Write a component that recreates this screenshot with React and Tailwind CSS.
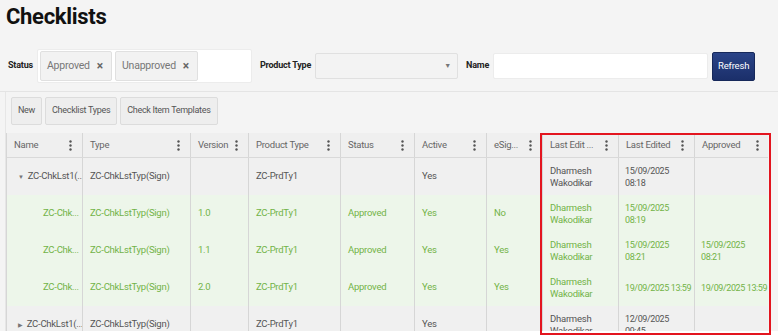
const font = { fontFamily: "Roboto, Lato, sans-serif" };

const columns = [
  { label: "Name", w: "w-[76px]" },
  { label: "Type", w: "w-[108px]" },
  { label: "Version", w: "w-[58px]" },
  { label: "Product Type", w: "w-[92px]" },
  { label: "Status", w: "w-[74px]" },
  { label: "Active", w: "w-[72px]" },
  { label: "eSig...", w: "w-[56px]" },
  { label: "Last Edit ...", w: "w-[76px]" },
  { label: "Last Edited", w: "w-[76px]" },
  { label: "Approved", w: "w-[74px]" },
];

const rows = [
  { kind: "parent", open: true, name: "ZC-ChkLst1(...", type: "ZC-ChkLstTyp(Sign)", version: "", product: "ZC-PrdTy1", status: "", active: "Yes", esig: "", by: ["Dharmesh", "Wakodikar"], edited: ["15/09/2025", "08:18"], approved: [] },
  { kind: "child", name: "ZC-Chk...", type: "ZC-ChkLstTyp(Sign)", version: "1.0", product: "ZC-PrdTy1", status: "Approved", active: "Yes", esig: "No", by: ["Dharmesh", "Wakodikar"], edited: ["15/09/2025", "08:19"], approved: [] },
  { kind: "child", name: "ZC-Chk...", type: "ZC-ChkLstTyp(Sign)", version: "1.1", product: "ZC-PrdTy1", status: "Approved", active: "Yes", esig: "Yes", by: ["Dharmesh", "Wakodikar"], edited: ["15/09/2025", "08:21"], approved: ["15/09/2025", "08:21"] },
  { kind: "child", name: "ZC-Chk...", type: "ZC-ChkLstTyp(Sign)", version: "2.0", product: "ZC-PrdTy1", status: "Approved", active: "Yes", esig: "Yes", by: ["Dharmesh", "Wakodikar"], edited: ["19/09/2025 13:59"], approved: ["19/09/2025 13:59"] },
  { kind: "parent", open: false, name: "ZC-ChkLst1(...", type: "ZC-ChkLstTyp(Sign)", version: "", product: "ZC-PrdTy1", status: "", active: "Yes", esig: "", by: ["Dharmesh", "Wakodikar"], edited: ["12/09/2025", "09:45"], approved: [] },
];

function Kebab() {
  return (
    <svg width="3" height="11" viewBox="0 0 3 11" className="shrink-0">
      <circle cx="1.5" cy="1.5" r="1.2" fill="#555" />
      <circle cx="1.5" cy="5.5" r="1.2" fill="#555" />
      <circle cx="1.5" cy="9.5" r="1.2" fill="#555" />
    </svg>
  );
}

function Chip({ label, w }) {
  return (
    <div className={`flex h-[30px] items-center justify-between rounded-[2px] border border-[#e0e0e0] bg-[#f2f2f2] pl-[6px] pr-[8px] text-[10.5px] tracking-[-0.2px] text-[#777] ${w}`}>
      <span>{label}</span>
      <span className="text-[12px] font-bold text-[#666]">×</span>
    </div>
  );
}

function Lines({ items }) {
  return (
    <div className="flex flex-col leading-[12px]">
      {items.map((t) => (
        <span key={t} className="whitespace-nowrap">{t}</span>
      ))}
    </div>
  );
}

function Row({ r }) {
  const child = r.kind === "child";
  const rowCls = child ? "bg-[#edf6ea] text-[#72b347]" : "bg-[#f0f0f0] text-[#555]";
  const cell = "flex shrink-0 items-center border-r border-[#d6d6d6] px-[7px] overflow-hidden";
  const dateCell = "flex shrink-0 items-center border-r border-[#d6d6d6] pl-[6px] text-[9px] tracking-[-0.4px] overflow-hidden";
  return (
    <div className={`flex h-[37px] shrink-0 text-[9.5px] tracking-[-0.25px] ${rowCls}`}>
      <div className={`${cell} w-[76px] ${child ? "pl-[36px]" : "pl-[11px]"}`}>
        {!child && (
          <span className="mr-[4px] text-[6px] text-[#777]">{r.open ? "▼" : "▶"}</span>
        )}
        <span className="whitespace-nowrap">{r.name}</span>
      </div>
      <div className={`${cell} w-[108px]`}>{r.type}</div>
      <div className={`${cell} w-[58px]`}>{r.version}</div>
      <div className={`${cell} w-[92px]`}>{r.product}</div>
      <div className={`${cell} w-[74px]`}>{r.status}</div>
      <div className={`${cell} w-[72px]`}>{r.active}</div>
      <div className={`${cell} w-[56px]`}>{r.esig}</div>
      <div className={`${cell} w-[76px]`}><Lines items={r.by} /></div>
      <div className={`${dateCell} w-[76px]`}><Lines items={r.edited} /></div>
      <div className={`${dateCell} w-[74px] border-r-0`}><Lines items={r.approved} /></div>
    </div>
  );
}

export default function App() {
  return (
    <div className="relative h-[336px] w-[778px] overflow-hidden bg-white" style={font}>
      <div className="h-[331px] overflow-hidden bg-[#f4f4f4]">
        <h1 className="px-[6px] pt-[2px] text-[22px] font-bold leading-[30px] tracking-[-0.3px] text-[#111]">Checklists</h1>

        <div className="mt-[17px] flex items-center px-[8px]">
          <span className="mr-[4px] text-[9px] font-bold tracking-[-0.2px] text-[#222]">Status</span>
          <div className="flex h-[34px] w-[215px] items-center gap-[3px] rounded-[2px] border border-[#ececec] bg-white px-[2px]">
            <Chip label="Approved" w="w-[72px]" />
            <Chip label="Unapproved" w="w-[83px]" />
          </div>
          <span className="ml-[8px] mr-[4px] text-[9px] font-bold tracking-[-0.2px] text-[#222]">Product Type</span>
          <div className="flex h-[26px] w-[143px] items-center justify-end rounded-[2px] border border-[#e0e0e0] bg-[#f3f3f3] pr-[6px]">
            <span className="text-[7px] text-[#777]">▼</span>
          </div>
          <span className="ml-[8px] mr-[4px] text-[9px] font-bold tracking-[-0.2px] text-[#222]">Name</span>
          <div className="h-[26px] w-[215px] rounded-[2px] border border-[#ececec] bg-white" />
          <button className="ml-[4px] h-[29px] w-[43px] rounded-[2px] border border-[#16285a] bg-gradient-to-b from-[#2a4488] to-[#1b2f6a] text-[9.5px] tracking-[-0.2px] text-white">
            Refresh
          </button>
        </div>

        <div className="mt-[8px] border-t border-[#e4e4e4]" />

        <div className="ml-[5px] border-l border-[#e6e6e6] pt-[5px]">
          <div className="flex gap-[3px] pl-[5px]">
            {["New", "Checklist Types", "Check Item Templates"].map((b) => (
              <button key={b} className="h-[28px] rounded-[2px] border border-[#dcdcdc] bg-[#eeeeee] px-[6px] text-[9px] tracking-[-0.3px] text-[#555]">
                {b}
              </button>
            ))}
          </div>

          <div className="mt-[8px] flex w-[762px] flex-col border-l border-[#d6d6d6]">
            <div className="flex h-[25px] shrink-0 border-b border-[#d9d9d9] bg-[#efefef] text-[9.5px] tracking-[-0.25px] text-[#666]">
              {columns.map((c, i) => (
                <div key={c.label} className={`flex shrink-0 items-center justify-between border-r border-[#d6d6d6] pl-[7px] pr-[10px] ${c.w} ${i === columns.length - 1 ? "border-r-0" : ""}`}>
                  <span className="whitespace-nowrap">{c.label}</span>
                  <Kebab />
                </div>
              ))}
            </div>
            {rows.map((r, i) => (
              <Row key={i} r={r} />
            ))}
          </div>
        </div>
      </div>
      <div className="pointer-events-none absolute left-[540px] top-[133px] h-[202px] w-[231px] border-2 border-[#e3151f]" />
    </div>
  );
}
